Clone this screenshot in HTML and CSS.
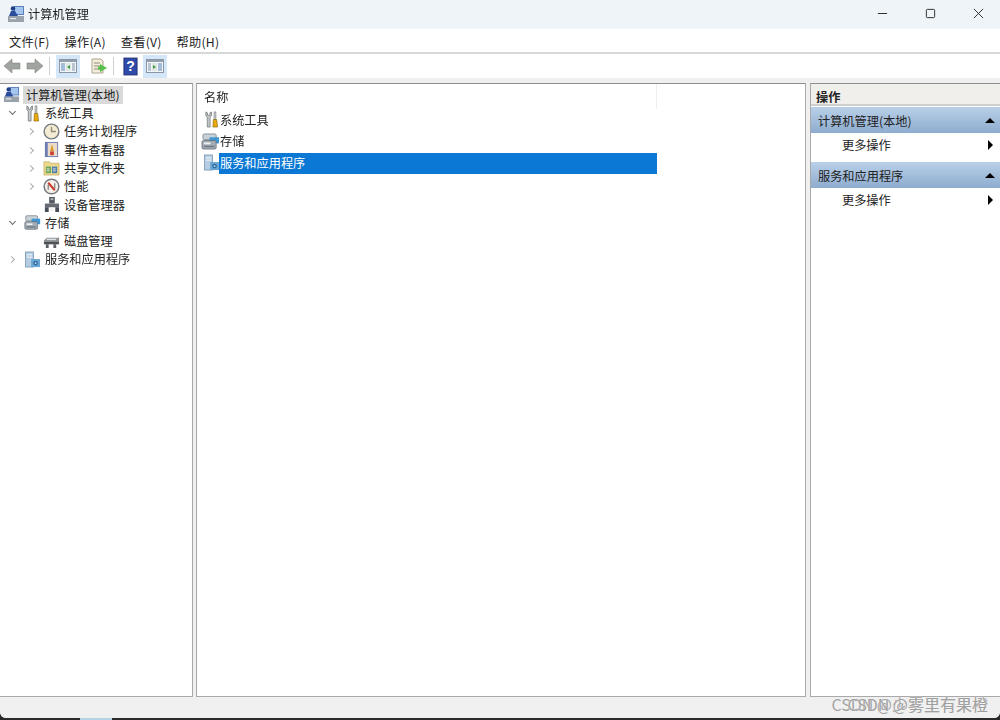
FILE: index.html
```html
<!DOCTYPE html>
<html lang="zh-CN">
<head>
<meta charset="utf-8">
<title>计算机管理</title>
<link rel="stylesheet" href="styles.css">
</head>
<body>
<svg class="defs" width="0" height="0" aria-hidden="true">
  <symbol id="i-pc" viewBox="0 0 18 18">
    <rect x="1" y="11" width="16" height="6" fill="#9aa3ac"/>
    <rect x="3" y="13" width="6" height="1.200" fill="#e6e9ec"/>
    <rect x="7" y="1" width="10" height="9" fill="#5b7fb8"/>
    <rect x="8" y="2" width="8" height="7" fill="#a4c6ee"/>
    <circle cx="6" cy="3.500" r="2.300" fill="#1f3f86"/>
    <path d="M2 11l2-5h4l3 5z" fill="#2a4e9c"/>
  </symbol>
  <symbol id="i-tools" viewBox="0 0 18 18">
    <path d="M3 1v4l1.500 1.500V17h3V6.500L9 5V1L7.300 2v2.500H4.700V2z" fill="#c3c7ca" stroke="#63686c" stroke-width=".7"/>
    <rect x="11.700" y="1" width="2" height="8" fill="#d3d6d8" stroke="#696d70" stroke-width=".6"/>
    <path d="M11 9h3.500l1 8H10.500z" fill="#e9ab0c" stroke="#7d5c08" stroke-width=".6"/>
  </symbol>
  <symbol id="i-clock" viewBox="0 0 18 18">
    <circle cx="9" cy="9" r="7.800" fill="#f4ecd2" stroke="#777c82" stroke-width="1.500"/>
    <path d="M9 4v5h4.500" fill="none" stroke="#8d8a74" stroke-width="1.400"/>
  </symbol>
  <symbol id="i-event" viewBox="0 0 18 18">
    <rect x="2" y="1" width="14" height="16" fill="#6b7db4"/>
    <rect x="5" y="2" width="10" height="14" fill="#eadcc8"/>
    <path d="M9.500 3.500l2 7h-4z" fill="#d99a2a"/>
    <rect x="7.500" y="11" width="4" height="4" fill="#cc3f38"/>
  </symbol>
  <symbol id="i-share" viewBox="0 0 18 18">
    <path d="M1 3h6l1 1.500h9V17H1z" fill="#ecd98c" stroke="#bba65a" stroke-width=".7"/>
    <rect x="3" y="8" width="5.500" height="7" fill="#6aa662"/>
    <rect x="9.500" y="8" width="5.500" height="7" fill="#4f7fb0"/>
    <path d="M4 10.500h3M4 12.500h3M10.500 10.500h3M10.500 12.500h3" stroke="#f5f2da" stroke-width=".9"/>
  </symbol>
  <symbol id="i-perf" viewBox="0 0 18 18">
    <circle cx="9" cy="9" r="7.800" fill="#f6f1e8" stroke="#777c82" stroke-width="1.600"/>
    <path d="M5.500 5l7 8" stroke="#cc3a30" stroke-width="2.200"/>
    <path d="M5.500 12.500V7M12.500 11V5.500" stroke="#565a60" stroke-width="1"/>
  </symbol>
  <symbol id="i-device" viewBox="0 0 18 18">
    <rect x="6.500" y="1" width="6" height="7" fill="#565c63"/>
    <rect x="8" y="2.500" width="3" height="1.500" fill="#c4c8cc"/>
    <rect x="2" y="8" width="15" height="4" fill="#666c72"/>
    <path d="M2 12v5h4v-5zM13 12v5h4v-5z" fill="#4a4f55"/>
    <rect x="8" y="12" width="3" height="4" fill="#f0f0f0"/>
  </symbol>
  <symbol id="i-store" viewBox="0 0 20 18">
    <rect x="2" y="1" width="14" height="6" rx="1.500" fill="#c9d1d8" stroke="#6f7a84" stroke-width=".8"/>
    <rect x="9" y="4.500" width="10" height="6.500" fill="#3f97d4"/>
    <rect x="1" y="8" width="15" height="9" rx="1.500" fill="#a3acb4" stroke="#5f6973" stroke-width=".8"/>
    <rect x="3" y="10" width="7" height="2" fill="#eef0f2"/>
    <rect x="3" y="13.500" width="11" height="1.500" fill="#6c767f"/>
  </symbol>
  <symbol id="i-disk" viewBox="0 0 18 18">
    <path d="M1 8l3-3h13v4H1z" fill="#8d9195"/>
    <rect x="1" y="9" width="16" height="3" fill="#4d5054"/>
    <path d="M3 12v4h3v-4zM11 12v4h3v-4z" fill="#5b5f63"/>
    <rect x="4" y="6" width="10" height="1.500" fill="#dde0e2"/>
  </symbol>
  <symbol id="i-serv" viewBox="0 0 18 18">
    <rect x="1.500" y="1" width="8.500" height="16" fill="#b5cde2" stroke="#7394b2" stroke-width=".8"/>
    <path d="M3 4h5.500M3 6.500h5.500" stroke="#f5f8fb" stroke-width="1"/>
    <rect x="7.500" y="8.500" width="9.500" height="8.500" fill="#6ba6d2"/>
    <circle cx="12.300" cy="12.800" r="2.500" fill="#2a6ba2"/>
    <circle cx="12.300" cy="12.800" r="1" fill="#cfe2f1"/>
  </symbol>
</svg>

<div class="window">
  <header class="titlebar">
    <svg class="icon"><use href="#i-pc"/></svg>
    <span class="title">计算机管理</span>
    <div class="controls">
      <svg class="ctl" viewBox="0 0 12 12"><path d="M1 6h10" stroke="#222" fill="none"/></svg>
      <svg class="ctl" viewBox="0 0 12 12"><rect x="1.500" y="1.500" width="9" height="9" rx="1" stroke="#222" fill="none"/></svg>
      <svg class="ctl" viewBox="0 0 12 12"><path d="M1 1l10 10M11 1L1 11" stroke="#222" fill="none"/></svg>
    </div>
  </header>

  <nav class="menubar">
    <span>文件(F)</span><span>操作(A)</span><span>查看(V)</span><span>帮助(H)</span>
  </nav>

  <div class="toolbar">
    <svg class="arrow" viewBox="0 0 18 16"><path d="M9 1L1 8l8 7v-4h8V5H9z" fill="#a0a4a0" stroke="#83877f" stroke-width=".6"/></svg>
    <svg class="arrow" viewBox="0 0 18 16"><path d="M9 1l8 7-8 7v-4H1V5h8z" fill="#a0a4a0" stroke="#83877f" stroke-width=".6"/></svg>
    <i class="sep"></i>
    <span class="tool on gap"><svg viewBox="0 0 18 16"><rect x=".5" y="1.500" width="17" height="13" fill="#f2f6fa" stroke="#8b96a2"/><rect x="1" y="2" width="16" height="2" fill="#939fac"/><rect x="2" y="5" width="4" height="8" fill="#a3bdd8"/><rect x="7" y="5" width="5" height="8" fill="#dfe8e0"/><path d="M11 7l-3 2 3 2z" fill="#3f9a46"/><rect x="13" y="5" width="3" height="8" fill="#b9c6d2"/></svg></span>
    <span class="tool"><svg viewBox="0 0 18 16"><path d="M2 1h9l2 2v12H2z" fill="#f5eedb" stroke="#aca590"/><path d="M4 5h6M4 8h6M4 11h6" stroke="#8e8a7c"/><path d="M10 6l7 4-7 4v-2.500H8v-3h2z" fill="#56c04a"/></svg></span>
    <i class="sep"></i>
    <span class="tool help"><svg viewBox="0 0 16 20"><rect x="1" y="1" width="14" height="18" fill="#2f4aa8" stroke="#1f2f78"/><text x="8" y="15" class="q">?</text></svg></span>
    <span class="tool on"><svg viewBox="0 0 18 16"><rect x=".5" y="1.500" width="17" height="13" fill="#f2f6fa" stroke="#8b96a2"/><rect x="1" y="2" width="16" height="2" fill="#939fac"/><rect x="2" y="5" width="3" height="8" fill="#b9c6d2"/><rect x="6" y="5" width="5" height="8" fill="#dfe8e0"/><path d="M7 7l3 2-3 2z" fill="#3f9a46"/><rect x="12" y="5" width="4" height="8" fill="#a3bdd8"/></svg></span>
  </div>

  <main class="panes">
    <section class="pane tree">
      <div class="node root"><svg class="icon"><use href="#i-pc"/></svg><span class="sel">计算机管理(本地)</span></div>
      <div class="node l1"><b class="tw open"></b><svg class="icon"><use href="#i-tools"/></svg><span>系统工具</span></div>
      <div class="node l2"><b class="tw"></b><svg class="icon"><use href="#i-clock"/></svg><span>任务计划程序</span></div>
      <div class="node l2"><b class="tw"></b><svg class="icon"><use href="#i-event"/></svg><span>事件查看器</span></div>
      <div class="node l2"><b class="tw"></b><svg class="icon"><use href="#i-share"/></svg><span>共享文件夹</span></div>
      <div class="node l2"><b class="tw"></b><svg class="icon"><use href="#i-perf"/></svg><span>性能</span></div>
      <div class="node l2"><b class="tw none"></b><svg class="icon"><use href="#i-device"/></svg><span>设备管理器</span></div>
      <div class="node l1"><b class="tw open"></b><svg class="icon"><use href="#i-store"/></svg><span>存储</span></div>
      <div class="node l2"><b class="tw none"></b><svg class="icon"><use href="#i-disk"/></svg><span>磁盘管理</span></div>
      <div class="node l1"><b class="tw"></b><svg class="icon"><use href="#i-serv"/></svg><span>服务和应用程序</span></div>
    </section>

    <section class="pane list">
      <div class="list-head"><span>名称</span></div>
      <div class="item"><svg class="icon"><use href="#i-tools"/></svg><span>系统工具</span></div>
      <div class="item"><svg class="icon wide"><use href="#i-store"/></svg><span>存储</span></div>
      <div class="item active"><svg class="icon"><use href="#i-serv"/></svg><span>服务和应用程序</span></div>
    </section>

    <aside class="pane actions">
      <div class="act-head">操作</div>
      <div class="act-sec"><span>计算机管理(本地)</span><i class="up"></i></div>
      <div class="act-row"><span>更多操作</span><i class="right"></i></div>
      <div class="act-sec"><span>服务和应用程序</span><i class="up"></i></div>
      <div class="act-row"><span>更多操作</span><i class="right"></i></div>
    </aside>
  </main>

  <footer class="status"></footer>
  <div class="mark"><span>CSDN @少雾里有果橙</span><span>CSDN @雾里有果橙</span></div>
</div>
<div class="taskbar"><i></i></div>
</body>
</html>
```
FILE: styles.css
```css
* { box-sizing: border-box; }
html, body { margin: 0; padding: 0; height: 100%; overflow: hidden; }
body {
  font-family: "Noto Sans CJK SC", "Liberation Sans", sans-serif;
  font-size: 12.2px;
  color: #222;
  background: #2a2a2a;
}
.defs { position: absolute; }
.window {
  position: relative;
  height: 718px;
  display: flex;
  flex-direction: column;
  background: #f0f0f0;
  border-radius: 0 0 6px 6px;
  overflow: hidden;
  filter: blur(.4px);
}
.icon { width: 18px; height: 18px; flex: none; }

.titlebar {
  height: 29px;
  flex: none;
  display: flex;
  align-items: center;
  padding: 0 0 2px 7px;
  gap: 3px;
  background: #eff4f9;
}
.controls { margin-left: auto; display: flex; gap: 37px; padding-right: 16px; }
.ctl { width: 11px; height: 11px; }

.menubar {
  height: 25px;
  flex: none;
  display: flex;
  align-items: center;
  gap: 15px;
  padding: 2px 0 0 9px;
  background: #fff;
  border-bottom: 2px solid #d8d8d8;
  letter-spacing: .24px;
}

.toolbar {
  height: 24px;
  flex: none;
  display: flex;
  align-items: center;
  padding-left: 3px;
  background: #fff;
}
.arrow { width: 18px; height: 16px; margin-right: 5px; }
.sep { width: 1px; height: 18px; background: #cfcfcf; margin: 0 6px 0 0; }
.tool { width: 24px; height: 23px; display: flex; align-items: center; justify-content: center; }
.tool svg { width: 18px; height: 16px; }
.tool.on { background: #d3e7f8; }
.tool.gap { margin-right: 7px; }
.tool + .sep { margin: 0 4px 0 2px; }
.tool.help { margin-right: 1px; }
.tool.help svg { width: 15px; height: 19px; }
.q { font: bold 15px "Liberation Sans", sans-serif; fill: #fff; text-anchor: middle; }

.panes {
  flex: 1;
  min-height: 0;
  display: grid;
  grid-template-columns: 192px 610px 1fr;
  gap: 4px;
  padding-top: 5px;
}
.pane {
  background: #fff;
  border: 1px solid #a9a9a9;
  border-top-color: #8e8e8e;
  min-height: 0;
}
.tree { border-left: 0; padding: 1.6px 0 0 3px; width: 193px; }
.node { height: 18.3px; display: flex; align-items: center; white-space: nowrap; }
.node .icon { width: 17px; height: 17px; }
.root .icon { margin-right: 3px; }
.root .sel { background: #d9d9d9; padding: 0 3px; line-height: 18px; }
.l1 { padding-left: 6px; }
.l2 { padding-left: 25px; }
.node .tw + .icon { margin-right: 4px; }
.tw {
  width: 6px;
  height: 6px;
  flex: none;
  margin-right: 9px;
  position: relative;
}
.tw::before {
  content: "";
  position: absolute;
  left: 0;
  top: 1px;
  width: 4px;
  height: 4px;
  border-top: 1px solid #adadad;
  border-right: 1px solid #adadad;
  transform: rotate(45deg);
}
.tw.open::before { transform: rotate(135deg); border-color: #6a6a6a; left: 1px; top: -1px; }
.tw.none::before { display: none; }

.list { padding: 0; }
.list-head {
  height: 25px;
  width: 460px;
  padding: 4px 0 0 7px;
  border-right: 1px solid #eee;
}
.item {
  height: 21.5px;
  display: flex;
  align-items: center;
  padding-left: 6px;
  white-space: nowrap;
}
.item .icon { width: 17px; height: 17px; margin-right: -1px; }
.item .icon.wide { width: 19px; margin-left: -2px; }
.item span { margin-left: 1px; }
.item.active { width: 460px; }
.item.active span {
  flex: 1;
  background: #0a78d4;
  color: #fff;
  height: 21px;
  line-height: 20px;
  padding-left: 1px;
  margin: 1px 0 0;
}

.actions { border-right: 0; }
.act-head {
  height: 22px;
  padding-left: 5px;
  font-weight: 700;
  line-height: 26px;
  background: #f1efec;
  border-bottom: 2px solid #d0d0d0;
  margin-bottom: 1px;
}
.act-sec {
  height: 26px;
  display: flex;
  align-items: center;
  justify-content: space-between;
  padding: 1px 5px 0 7px;
  background: linear-gradient(#b9d0e8, #8eaccf);
}
.act-row {
  height: 29px;
  display: flex;
  align-items: center;
  justify-content: space-between;
  padding: 0 7px 5px 31px;
}
.up { width: 0; height: 0; border: 5px solid transparent; border-top: 0; border-bottom: 5px solid #000; }
.right { width: 0; height: 0; border: 5px solid transparent; border-right: 0; border-left: 5px solid #000; }

.status { height: 21px; flex: none; background: #f0f0f0; }
.mark { position: absolute; right: 12px; bottom: 5px; color: #a0a0a0; font-size: 16px; line-height: 18px; }
.mark span { position: absolute; right: 0; bottom: 0; white-space: nowrap; text-shadow: 0 0 1px #fff; }

.taskbar { height: 2px; padding-left: 80px; }
.taskbar i { display: block; width: 32px; height: 2px; background: #b7d3e6; }
```
